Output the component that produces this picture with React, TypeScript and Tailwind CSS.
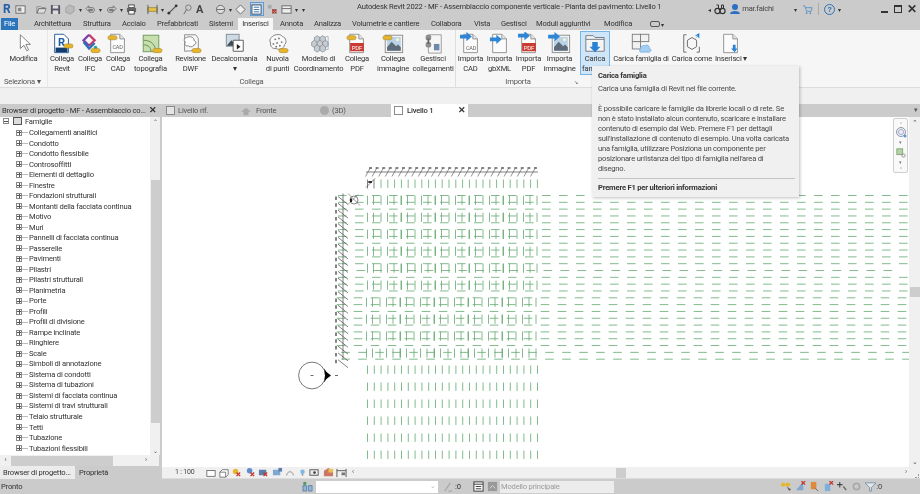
import React from "react";

const rows = (n: number) => Array.from({ length: n }, (_, i) => i);

const TREE = ["Collegamenti analitici","Condotto","Condotto flessibile","Controsoffitti","Elementi di dettaglio","Finestre","Fondazioni strutturali","Montanti della facciata continua","Motivo","Muri","Pannelli di facciata continua","Passerelle","Pavimenti","Pilastri","Pilastri strutturali","Planimetria","Porte","Profili","Profili di divisione","Rampe inclinate","Ringhiere","Scale","Simboli di annotazione","Sistema di condotti","Sistema di tubazioni","Sistemi di facciata continua","Sistemi di travi strutturali","Telaio strutturale","Tetti","Tubazione","Tubazioni flessibili"];

const TABS: [string, string][] = [["Architettura","w-[37px]"],["Struttura","w-[27px]"],["Acciaio","w-[23px]"],["Prefabbricati","w-[40px]"],["Sistemi","w-[22px]"]];
const TABS2: [string, string][] = [["Annota","w-[22px]"],["Analizza","w-[26px]"],["Volumetrie e cantiere","w-[67px]"],["Collabora","w-[31px]"],["Vista","w-[15px]"],["Gestisci","w-[23px]"],["Moduli aggiuntivi","w-[56px]"],["Modifica","w-[29px]"]];

const Badge = ({ x = 15, y = 18 }: { x?: number; y?: number }) => (
  <rect x={x} y={y} width="10" height="4.5" rx="2.2" fill="#e6b52c" stroke="#a9852b" strokeWidth="0.6" />
);
const Page = ({ children }: { children?: React.ReactNode }) => (
  <g>
    <path d="M5 2.5h10l5 5v15H5z" fill="#fbfbfb" stroke="#8d8d8d" />
    <path d="M15 2.5v5h5" fill="#e6e6e6" stroke="#8d8d8d" />
    {children}
  </g>
);
const ArrowR = ({ x = 1, y = 9 }: { x?: number; y?: number }) => (
  <path d={`M${x} ${y}h7v-3l6 5-6 5v-3h-7z`} fill="#2f86d6" />
);
const Pic = () => (
  <g>
    <rect x="4.5" y="3.5" width="19" height="19" fill="#f4f4f4" stroke="#8a8a8a" />
    <rect x="6.5" y="5.5" width="15" height="15" fill="#b9d3e8" />
    <path d="M6.5 20.5v-4l5-6 5 5 2-2 3 3v4z" fill="#5e6b78" />
    <circle cx="18" cy="8.5" r="1.6" fill="#fff6c4" />
  </g>
);
const PdfPage = () => (
  <Page>
    <rect x="5.5" y="12" width="15" height="9" fill="#c93b30" />
    <text x="13" y="19.3" textAnchor="middle" fontSize="6.5" fill="#fff" fontFamily="Roboto, sans-serif">PDF</text>
  </Page>
);

const ICONS: Record<string, React.ReactNode> = {
  modifica: <path d="M9 3l0 15 4-3.5 3 6 2-1-3-6h5z" fill="#fff" stroke="#6f6f6f" strokeWidth="0.9" strokeLinejoin="round" />,
  revit: (<g><path d="M5 2.5h10l5 5v15H5z" fill="#fff" stroke="#20558f" /><rect x="6" y="17" width="13" height="5" fill="#143d6e" /><text x="12.5" y="15" textAnchor="middle" fontSize="12" fontWeight="700" fill="#1c5ea6" fontFamily="Roboto, sans-serif">R</text><Badge x={15} y={13} /></g>),
  ifc: (<g fill="none" strokeWidth="2.6"><path d="M12 3l6 6-6 6" stroke="#c93a6a" /><path d="M12 3L6 9l6 6" stroke="#7b3fb0" /><path d="M6 11l6 7 6-6" stroke="#2d6fb8" /><circle cx="19" cy="17" r="2" fill="#2fa3a0" stroke="none" /><Badge x={14} y={18} /></g>),
  cad: (<Page><text x="12.5" y="19" textAnchor="middle" fontSize="6" fill="#666" fontFamily="Roboto, sans-serif">CAD</text><Badge x={2} y={4} /></Page>),
  topo: (<g><rect x="4.5" y="3.5" width="17" height="18" fill="#c7dfae" stroke="#6e9658" /><path d="M5 9c8 0 13 5 13 12M5 14c5 0 8 3 8 7" fill="none" stroke="#5f8a4c" /><Badge x={15} y={18} /></g>),
  dwf: (<g><path d="M6 3h12l3 4v13l-15 1z" fill="#f7f7f7" stroke="#888" /><path d="M8 6c-3 1-3 4-1 5-2 2 0 5 3 4 2 2 6 1 6-1 3 0 3-4 0-5 1-3-4-5-8-3z" fill="#fff" stroke="#777" /><Badge x={14} y={18} /></g>),
  decal: (<g><rect x="3.5" y="2.5" width="14" height="13" fill="#cfd9e4" stroke="#7f8a94" /><path d="M4 15l5-6 4 4 4-2v4z" fill="#3e4a55" /><path d="M11 9h11v12H11z" fill="#fff" stroke="#555" /><path d="M15 13l4 3-4 3" fill="#222" /></g>),
  nuvola: (<g><path d="M7 5c3-3 9-3 11 0 4 1 5 7 2 9 0 4-6 6-9 4-4 1-7-3-6-6-2-3 0-6 2-7z" fill="#fbfbfb" stroke="#777" />{[[10,8],[14,7],[17,11],[12,12],[8,13],[15,15],[11,16]].map(([x,y],i)=><circle key={i} cx={x} cy={y} r="1" fill="#777" />)}<Badge x={14} y={18} /></g>),
  modello: (<g fill="#c7ccd1" stroke="#7a8088" strokeWidth="0.7">{[[8,4],[14,4],[5,9],[11,9],[17,9],[8,14],[14,14]].map(([x,y],i)=><path key={i} d={`M${x} ${y+2}l3-2 3 2v4l-3 2-3-2z`} />)}<path d="M20 5h3v14h-3" fill="none" stroke="#7f9bbd" /></g>),
  lpdf: <g><PdfPage /><Badge x={2} y={4} /></g>,
  limg: <g><Pic /><Badge x={2} y={4} /></g>,
  gest: (<g><path d="M8 3h14l0 20H8z" fill="#f6f6f6" stroke="#999" /><rect x="5" y="3" width="6" height="6" rx="2" fill="#8e8e8e" /><rect x="5" y="11" width="6" height="6" rx="2" fill="#8e8e8e" /><rect x="7" y="7" width="2" height="6" fill="#666" /><rect x="14" y="13" width="6" height="7" fill="#6f8aa8" /></g>),
  icad: (<Page><text x="13" y="20" textAnchor="middle" fontSize="6" fill="#666" fontFamily="Roboto, sans-serif">CAD</text><ArrowR x={1} y={3} /></Page>),
  ixml: <Page><ArrowR x={2} y={6} /></Page>,
  ipdf: <g><PdfPage /><ArrowR x={1} y={2} /></g>,
  iimg: <g><Pic /><ArrowR x={0} y={3} /></g>,
  fam: (<g><path d="M3 4h8l2 2h10v15H3z" fill="#f5f5f5" stroke="#6d7680" /><path d="M3 8h20" stroke="#6d7680" /><path d="M10 11h6v5h3l-6 6-6-6h3z" fill="#2a82d4" /></g>),
  famdi: (<g><rect x="3.5" y="2.5" width="9" height="8" fill="#f1f1f1" stroke="#7d7d7d" /><rect x="12.5" y="2.5" width="9" height="8" fill="#f1f1f1" stroke="#7d7d7d" /><rect x="3.5" y="10.5" width="9" height="8" fill="#f1f1f1" stroke="#7d7d7d" /><path d="M12 19c0-3 3-5 5-4 2-2 6 0 5 3 2 0 3 3 0 4H13c-2 0-2-3-1-3z" fill="#a4cdf0" stroke="#5a9fdc" strokeWidth="0.6" /></g>),
  come: (<g fill="none" stroke="#666"><path d="M7 3H4v19h3M18 22h3v-6" /><path d="M8 9l5-3 5 3v7l-5 3-5-3z" fill="#f6f6f6" /><path d="M16 8l3-4h-3l5-3v6l-2-2z" fill="#2a82d4" stroke="none" /></g>),
  ins: (<Page><path d="M15 14h3v4h2l-3 4-4-4h2z" fill="#2a82d4" /></Page>),
};

const Ico = ({ name }: { name: string }) => (
  <svg viewBox="0 0 26 24" className="w-[24px] h-[22px] shrink-0">{ICONS[name]}</svg>
);

const Rb = ({ w, icon, a, b, active }: { w: string; icon: string; a: string; b?: string; active?: boolean }) => (
  <div className={`${w} h-[44px] flex flex-col items-center shrink-0 whitespace-nowrap leading-[10px] ${active ? "bg-[#cfe5f8] border border-[#79b4e4] mt-[1px] -mb-[1px]" : ""}`}>
    <div className={`h-[22px] ${active ? "mt-[0px]" : "mt-[2px]"}`}><Ico name={icon} /></div>
    <div className="w-full flex justify-center">{a}</div>
    {b && <div className="w-full flex justify-center">{b}</div>}
  </div>
);

const Small = ({ children, w = 11 }: { children: React.ReactNode; w?: number }) => (
  <svg viewBox="0 0 12 12" width={w} height={w} className="shrink-0">{children}</svg>
);

const RX = ({ x = 7, y = 6 }: { x?: number; y?: number }) => (
  <path d={`M${x} ${y}l4 4m0-4l-4 4`} stroke="#c9332b" strokeWidth="1.4" />
);

function Drawing() {
  const G = "#62a870";
  const K = "#4a4a4a";
  const dashRows = rows(25).map((i) => {
    const y = 196 + i * 6.82;
    let off = i >= 15 ? -1.3 : 0;
    if (i === 11) off = 1.5;
    if (i >= 23) off = 3.2;
    const last = i === 11 ? 892 : i >= 23 ? 920 : 910;
    const d: string[] = [];
    for (let x = 338 + off; x + 8 < last; x += 17) d.push(`M${x.toFixed(2)} ${y.toFixed(2)}h8.6`);
    return d.join("");
  }).join("");
  const bands: string[] = [];
  rows(10).forEach((b) => {
    const cy = 200.8 + b * 16.98;
    const base = b >= 6 ? -1 : 0;
    rows(5).forEach((k) => {
      [367.5, 373.5, 381, 387.5, 394, 401].forEach((o) => {
        const x = o + k * 34 + base;
        bands.push(`M${x.toFixed(1)} ${(cy - 4.6).toFixed(1)}v9.2`);
      });
    });
  });
  const cols: string[] = [];
  [370, 387, 404, 421, 438, 455].forEach((y) => {
    rows(26).forEach((k) => cols.push(`M${(367.5 + k * 6.8).toFixed(1)} ${y - 4}v8.4`));
  });
  rows(24).forEach((k) => cols.push(`M${(381 + k * 6.8).toFixed(1)} 180v8.4`));
  const topTicks = rows(26).map((k) => `M${(365.5 + k * 6.6).toFixed(1)} 177l5-9`).join("");
  const topDots = rows(26).map((k) => `M${(369 + k * 6.6).toFixed(1)} 168.5h3`).join("");
  const leftTicks = rows(25).map((k) => `M338 ${(197 + k * 6.8).toFixed(1)}l10 8`).join("");
  const leftDots = rows(25).map((k) => `M336 ${(197 + k * 6.8).toFixed(1)}v3.5`).join("");
  return (
    <svg viewBox="162 118 747 349" className="w-full h-full block">
      <path d={dashRows} stroke={G} strokeWidth="0.8" fill="none" />
      <path d={bands.join("")} stroke={G} strokeWidth="0.8" fill="none" />
      <path d={cols.join("")} stroke={G} strokeWidth="0.8" fill="none" />
      <path d="M366 172.5H538" stroke={K} strokeWidth="0.7" />
      <path d={topTicks} stroke={K} strokeWidth="0.6" />
      <path d={topDots} stroke="#666" strokeWidth="1.4" />
      <path d="M343 194V360" stroke={K} strokeWidth="0.7" />
      <path d={leftTicks} stroke={K} strokeWidth="0.7" />
      <path d={leftDots} stroke="#666" strokeWidth="1.6" />
      <path d="M367.5 180v9M374 180v9M366 188l9-9M368 182.5h4" stroke={K} strokeWidth="0.7" fill="none" />
      <rect x="368.5" y="181.5" width="3.5" height="2" fill="#333" />
      <circle cx="354" cy="200.5" r="4" fill="#fff" stroke="#555" strokeWidth="0.7" />
      <path d="M348 194l12 12M358 195l-10 10" stroke="#555" strokeWidth="0.6" />
      <rect x="350" y="199" width="2" height="3.5" fill="#222" />
      <circle cx="312" cy="376" r="13.4" fill="#fff" stroke="#555" strokeWidth="0.8" />
      <path d="M324 369q2 4 7 7q-5 3-7 7q2-7 0-14z" fill="#000" />
      <path d="M310.5 376h3M335 376h3" stroke="#444" strokeWidth="0.8" />
    </svg>
  );
}

export default function App() {
  return (
    <div className="relative w-[920px] h-[494px] overflow-hidden flex flex-col bg-[#f0f0f0] text-[7.6px] tracking-[-0.2px] text-[#333] blur-[0.3px] font-['Roboto',sans-serif]">
      {/* Title bar */}
      <div className="h-[18px] shrink-0 bg-[#cbcbcb] flex items-center relative">
        <div className="flex items-center pl-[3px] gap-[3.3px] w-[357px] shrink-0">
          <span className="text-[12px] leading-none font-bold text-[#1f5fa8] w-[9px]">R</span>
          <Small><rect x="1" y="2" width="10" height="8" fill="#eee" stroke="#666" /><rect x="3" y="4" width="4" height="4" fill="#888" /></Small>
          <span className="w-[3px]" />
          <Small><path d="M1 3h4l1 1h4v1H3l-2 5zM3 5h8l-2 5H1z" fill="#ddd" stroke="#666" strokeWidth="0.7" /></Small>
          <Small><path d="M1 1h9l1 1v9H1z" fill="#556" /><rect x="3" y="1.5" width="6" height="3.5" fill="#ddd" /><rect x="3" y="7" width="6" height="4" fill="#ddd" /></Small>
          <Small><path d="M2 4l4-3 5 2v5l-4 3-5-2z" fill="#bbb" stroke="#888" strokeWidth="0.6" /></Small>
          <span className="text-[6px] w-[3px]">▾</span>
          <Small><path d="M1 5l3-3v2h4c3 0 3 5 0 5H5v-2h3c1 0 1-1 0-1H4v2z" fill="none" stroke="#666" strokeWidth="0.9" /></Small>
          <span className="text-[6px] w-[3px]">▾</span>
          <Small><path d="M11 5L8 2v2H4c-3 0-3 5 0 5h3V7H4c-1 0-1-1 0-1h4v2z" fill="none" stroke="#666" strokeWidth="0.9" /></Small>
          <span className="text-[6px] w-[3px]">▾</span>
          <Small><rect x="3" y="1" width="6" height="3" fill="#fff" stroke="#444" /><rect x="1" y="4" width="10" height="5" rx="1" fill="#666" /><rect x="3" y="7" width="6" height="4" fill="#fff" stroke="#444" /></Small>
          <span className="w-[3px]" />
          <Small><path d="M1 4h10v4H1z" fill="#e6c34a" stroke="#8a7320" strokeWidth="0.7" /><path d="M1 1v10M11 1v10" stroke="#555" /></Small>
          <span className="text-[6px] w-[3px]">▾</span>
          <Small><path d="M2 10l8-8" stroke="#555" strokeWidth="1.4" /><circle cx="2" cy="10" r="1.5" fill="#333" /><circle cx="10" cy="2" r="1.5" fill="#333" /></Small>
          <Small><circle cx="7" cy="4" r="3" fill="none" stroke="#777" /><path d="M2 11l3-5" stroke="#666" /></Small>
          <span className="text-[11px] leading-none font-bold text-[#444] w-[8px]">A</span>
          <span className="w-[4px]" />
          <Small><circle cx="6" cy="6" r="4.5" fill="#ddd" stroke="#666" /><path d="M2 6h8" stroke="#666" /></Small>
          <span className="text-[6px] w-[3px]">▾</span>
          <Small><path d="M6 1l5 5-5 5-5-5z" fill="#eee" stroke="#666" /></Small>
          <div className="w-[14px] h-[14px] bg-[#bcd6ee] border border-[#5e9bd2] flex items-center justify-center shrink-0">
            <Small><rect x="1" y="1" width="10" height="10" fill="#fff" stroke="#345" /><path d="M3 3.5h6M3 6h6M3 8.5h6" stroke="#2a6fb8" /></Small>
          </div>
          <Small><rect x="1" y="1" width="4" height="4" fill="#aaa" /><rect x="6" y="6" width="4" height="4" fill="#eee" stroke="#777" /><RX x={6} y={6} /></Small>
          <Small><rect x="1" y="2" width="10" height="8" fill="#eee" stroke="#666" /><path d="M1 5h10" stroke="#666" /></Small>
          <span className="text-[6px] w-[3px]">▾</span>
          <span className="text-[6px]">▾</span>
        </div>
        <div className="w-[304px] text-center whitespace-nowrap shrink-0 -mt-[4px]">Autodesk Revit 2022 - MF - Assemblaccio componente verticale - Pianta del pavimento: Livello 1</div>
        <div className="flex items-center flex-1 justify-end pr-[3px]">
          <span className="text-[6px] mr-[3px]">◂</span>
          <Small w={12}><circle cx="3.5" cy="8" r="2.6" fill="none" stroke="#333" strokeWidth="1.2" /><circle cx="8.5" cy="8" r="2.6" fill="none" stroke="#333" strokeWidth="1.2" /><path d="M2.5 2h2v4h3V2h2v4" fill="none" stroke="#333" /></Small>
          <span className="w-[3px]" />
          <Small w={12}><circle cx="6" cy="4" r="3" fill="#2a6fc4" /><path d="M1 11c0-4 10-4 10 0z" fill="#2a6fc4" /></Small>
          <span className="ml-[1px] w-[52px] text-[#444]">mar.falchi</span>
          <span className="text-[6px] w-[8px]">▾</span>
          <Small><path d="M1 2h2l2 6h5l1-4H4" fill="none" stroke="#5d93c4" /><circle cx="5" cy="10" r="1" fill="#5d93c4" /><circle cx="9" cy="10" r="1" fill="#5d93c4" /></Small>
          <span className="w-px h-[12px] bg-[#aaa] mx-[5px]" />
          <span className="w-[11px] h-[11px] rounded-full border border-[#2a72b8] text-[#2a72b8] text-[8px] leading-[10px] text-center font-bold">?</span>
          <span className="text-[6px] ml-[3px] w-[43px]">▾</span>
          <span className="w-[7px] h-[2px] bg-[#333] mt-[6px]" />
          <span className="ml-[6px] w-[8px] h-[8px] border border-[#333] border-t-2" />
          <span className="ml-[5px] text-[12px] leading-none font-bold text-[#333]">✕</span>
        </div>
      </div>

      {/* Ribbon tabs */}
      <div className="h-[12px] shrink-0 bg-[#cbcbcb] flex items-stretch whitespace-nowrap">
        <div className="ml-[1px] w-[17px] bg-[#2a75bb] text-white flex items-center justify-center">File</div>
        <div className="flex items-center gap-[12px] pl-[16px]">
          {TABS.map(([t, w]) => <span key={t} className={w}>{t}</span>)}
        </div>
        <div className="w-[35px] ml-[7px] bg-[#f6f6f6] flex items-center justify-center">Inserisci</div>
        <div className="flex items-center gap-[12px] pl-[7px]">
          {TABS2.map(([t, w]) => <span key={t} className={w}>{t}</span>)}
          <span className="ml-[5px] w-[10px] h-[6px] rounded-[2px] border border-[#555]" />
          <span className="text-[6px] -ml-[11px]">▾</span>
        </div>
      </div>

      {/* Ribbon */}
      <div className="h-[58px] shrink-0 bg-[#f6f6f6] border-b border-[#dcdcdc] flex items-stretch">
        <div className="w-[47px] shrink-0 flex flex-col justify-between">
          <Rb w="w-[47px]" icon="modifica" a="Modifica" />
          <div className="leading-[10px] pl-[4px] text-[#555]">Seleziona ▾</div>
        </div>
        <div className="w-[408px] shrink-0 flex flex-col justify-between border-l border-[#e8e8e8]">
          <div className="flex">
            <Rb w="w-[28px]" icon="revit" a="Collega" b="Revit" />
            <Rb w="w-[28px]" icon="ifc" a="Collega" b="IFC" />
            <Rb w="w-[28px]" icon="cad" a="Collega" b="CAD" />
            <Rb w="w-[37px]" icon="topo" a="Collega" b="topografia" />
            <Rb w="w-[43px]" icon="dwf" a="Revisione" b="DWF" />
            <Rb w="w-[45px]" icon="decal" a="Decalcomania" b="▾" />
            <Rb w="w-[41px]" icon="nuvola" a="Nuvola" b="di punti" />
            <Rb w="w-[41px]" icon="modello" a="Modello di" b="Coordinamento" />
            <Rb w="w-[36px]" icon="lpdf" a="Collega" b="PDF" />
            <Rb w="w-[36px]" icon="limg" a="Collega" b="immagine" />
            <Rb w="w-[44px]" icon="gest" a="Gestisci" b="collegamenti" />
          </div>
          <div className="leading-[10px] text-center text-[#555]">Collega</div>
        </div>
        <div className="w-[125px] shrink-0 flex flex-col justify-between border-l border-[#dedede]">
          <div className="flex">
            <Rb w="w-[29px]" icon="icad" a="Importa" b="CAD" />
            <Rb w="w-[29px]" icon="ixml" a="Importa" b="gbXML" />
            <Rb w="w-[29px]" icon="ipdf" a="Importa" b="PDF" />
            <Rb w="w-[33px]" icon="iimg" a="Importa" b="immagine" />
          </div>
          <div className="leading-[10px] text-center text-[#555] relative">Importa<span className="absolute right-[2px] text-[5px]">↘</span></div>
        </div>
        <div className="flex items-start">
          <Rb w="w-[30px]" icon="fam" a="Carica" b="famiglia" active />
          <Rb w="w-[62px]" icon="famdi" a="Carica famiglia di" />
          <Rb w="w-[40px]" icon="come" a="Carica come" />
          <Rb w="w-[38px]" icon="ins" a="Inserisci ▾" />
        </div>
      </div>

      <div className="h-[16px] shrink-0 bg-[#f0f0f0]" />

      {/* Main */}
      <div className="flex-1 min-h-0 flex bg-[#cbcbcb]">
        {/* Browser */}
        <div className="w-[160px] shrink-0 flex flex-col">
          <div className="h-[13px] shrink-0 flex items-center justify-between pl-[2px] pr-[3px] whitespace-nowrap">
            <span>Browser di progetto - MF - Assemblaccio co...</span>
            <span className="font-bold text-[9px] leading-none text-[#333]">✕</span>
          </div>
          <div className="flex-1 min-h-0 flex bg-white">
            <div className="flex-1 min-w-0 overflow-hidden">
              <div className="h-[10.5px] -mt-[1px] mb-[1px] flex items-center">
                <span className="ml-[3px] w-[6px] h-[6px] border border-[#888] flex items-center justify-center"><span className="w-[4px] h-px bg-[#555]" /></span>
                <span className="ml-[4px] w-[9px] h-[8px] border border-[#555] bg-[#ddd]" />
                <span className="ml-[3px]">Famiglie</span>
              </div>
              {TREE.map((t) => (
                <div key={t} className="h-[10.52px] flex items-center whitespace-nowrap">
                  <span className="ml-[16px] w-[6px] h-[6px] border border-[#888] relative shrink-0">
                    <span className="absolute left-0 top-[1.5px] w-[4px] h-px bg-[#555]" />
                    <span className="absolute left-[1.5px] top-0 w-px h-[4px] bg-[#555]" />
                  </span>
                  <span className="w-[6px] h-px bg-[#bbb] mr-[1px]" />
                  <span>{t}</span>
                </div>
              ))}
            </div>
            <div className="w-[10px] shrink-0 bg-[#f0f0f0] flex flex-col items-center relative">
              <span className="h-[63px] text-[6px] leading-[10px] text-[#555]">⌃</span>
              <span className="w-[9px] h-[243px] bg-[#cdcdcd]" />
              <span className="absolute bottom-[0px] text-[6px] text-[#555]">⌄</span>
            </div>
          </div>
          <div className="h-[11px] shrink-0 bg-[#f0f0f0] flex items-center mr-[1px]">
            <span className="w-[11px] text-center text-[7px] leading-none text-[#555]">‹</span>
            <span className="w-[102px] h-[10px] bg-[#cdcdcd]" />
            <span className="flex-1 text-right pr-[12px] text-[7px] leading-none text-[#555]">›</span>
          </div>
          <div className="h-[13px] shrink-0 flex whitespace-nowrap">
            <div className="w-[75px] bg-[#ececec] flex items-center pl-[3px]">Browser di progetto...</div>
            <div className="flex-1 flex items-center pl-[4px]">Proprietà</div>
          </div>
        </div>

        {/* Views */}
        <div className="flex-1 min-w-0 ml-[2px] flex flex-col relative">
          <div className="h-[13px] shrink-0 flex items-stretch whitespace-nowrap relative">
            <div className="w-[78px] flex items-center pl-[4px] gap-[3px] text-[#555]">
              <span className="w-[9px] h-[9px] border border-[#8a8a8a] bg-[#e4e4e4]" />Livello rif.
            </div>
            <div className="w-[77px] flex items-center pl-[1px] gap-[5px] text-[#555]">
              <Small w={10}><path d="M6 2l6 5H9v4H3V7H0z" fill="#aaa" /></Small>Fronte
            </div>
            <div className="w-[74px] flex items-center pl-[3px] gap-[3px] text-[#555]">
              <span className="w-[9px] h-[9px] rounded-full bg-[#aaa]" />(3D)
            </div>
            <div className="w-[77px] bg-white flex items-center pl-[3px] gap-[4px] font-medium text-[#333]">
              <span className="w-[9px] h-[9px] border border-[#8a8a8a]" />
              <span className="flex-1">Livello 1</span>
              <span className="font-bold text-[9px] leading-none pr-[2px]">✕</span>
            </div>
            <span className="absolute right-[2px] top-[1px] text-[7px] text-[#555]">▾</span>
          </div>
          <div className="flex-1 min-h-0 flex bg-white">
            <div className="flex-1 min-w-0 relative"><Drawing /></div>
            <div className="w-[11px] shrink-0 bg-[#f0f0f0] flex flex-col items-center relative">
              <span className="text-[7px] leading-[10px] text-[#555] mt-[1px]">⌃</span>
              <span className="mt-[159px] w-[10px] h-[10px] bg-[#cdcdcd]" />
              <span className="absolute bottom-[1px] text-[7px] leading-[8px] text-[#555]">⌄</span>
            </div>
          </div>
          <div className="h-[11px] shrink-0 bg-[#f0f0f0] flex items-center">
            <span className="ml-[13px] w-[24px] text-[7px] text-[#444]">1 : 100</span>
            <span className="ml-[7px] flex items-center gap-[2.5px]">
              <Small w={10}><rect x="1" y="3" width="10" height="7" fill="#fff" stroke="#666" /></Small>
              <Small w={10}><path d="M1 5h7v6H1zM1 5l3-3h7v6l-3 3" fill="#fff" stroke="#666" /></Small>
              <Small w={11}><circle cx="5" cy="5" r="3" fill="#e5b72f" /><RX x={6} y={6} /></Small>
              <Small w={11}><circle cx="5" cy="4" r="3" fill="#5a8fcb" /><RX x={6} y={6} /></Small>
              <Small w={11}><rect x="1" y="3" width="8" height="6" fill="#5a7fab" /><RX x={6} y={6} /></Small>
              <Small w={11}><rect x="1" y="3" width="8" height="6" fill="#7fa7d1" /><rect x="7" y="1" width="4" height="4" fill="#5a7fab" /></Small>
              <Small w={10}><path d="M2 9c0-6 8-6 8 0" fill="none" stroke="#888" /></Small>
              <Small w={9}><circle cx="6" cy="5" r="3" fill="#7fb8e6" /><rect x="5" y="8" width="2" height="2" fill="#888" /></Small>
              <Small w={11}><rect x="1" y="3" width="9" height="6" fill="#eee" stroke="#555" /><circle cx="6" cy="6" r="1.5" fill="#444" /></Small>
              <Small w={11}><path d="M1 10V4l5-3 5 3v6z" fill="#c76" /><rect x="6" y="2" width="5" height="4" fill="#e9c34d" /></Small>
              <Small w={11}><path d="M1 2v9M11 2v9M1 4h10" stroke="#555" fill="none" /><rect x="6" y="6" width="4" height="3" fill="#777" /></Small>
            </span>
            <span className="ml-[5px] text-[7px] leading-none text-[#555]">‹</span>
            <span className="ml-[262px] flex-1 h-[10px] relative flex items-center justify-end pr-[13px]">
              <span className="absolute left-[0px] w-[10px] h-[10px] bg-[#cdcdcd]" />
              <span className="text-[7px] leading-none text-[#555]">›</span>
              <span className="absolute right-[1px] bottom-0 w-[4px] h-[4px] border-r border-b border-dotted border-[#999]" />
            </span>
          </div>
          <div className="h-px shrink-0 bg-[#dcdcdc]" />

          {/* Navigation bar */}
          <div className="absolute left-[731px] top-[14px] w-[15px] h-[55px] bg-[#f9f9f9] border border-[#cfcfcf] rounded-[2px] flex flex-col items-center justify-around py-[2px]">
            <span className="w-[2px] h-[2px] rounded-full bg-[#ccc]" />
            <Small w={12}><circle cx="6" cy="6" r="4.5" fill="#eef" stroke="#8a9aa8" /><circle cx="6" cy="6" r="2.5" fill="none" stroke="#aab" /><circle cx="10" cy="10" r="1.5" fill="#5b9bd5" /></Small>
            <span className="text-[5px] leading-none text-[#777]">▾</span>
            <Small w={10}><rect x="1" y="1" width="7" height="7" fill="#b3d3a4" stroke="#7c9f6d" /><circle cx="9" cy="9" r="2" fill="none" stroke="#888" /></Small>
            <span className="text-[5px] leading-none text-[#777]">▾</span>
            <span className="w-[2px] h-[2px] rounded-full bg-[#ccc]" />
          </div>
        </div>
      </div>

      {/* Status bar */}
      <div className="h-[15px] shrink-0 bg-[#cbcbcb] flex items-center whitespace-nowrap">
        <span className="ml-[1px] w-[301px]">Pronto</span>
        <Small w={11}><path d="M1 5h4v6H1zM7 5h4v6H7z" fill="#8fb5d8" stroke="#3c6d94" strokeWidth="0.7" /><circle cx="3" cy="2.5" r="1.8" fill="#4e9a5e" /></Small>
        <span className="ml-[3px] w-[122px] h-[12px] bg-white flex items-center justify-end pr-[2px] text-[7px] text-[#bbb]">⌄</span>
        <span className="ml-[4px]"><Small w={11}><path d="M3 11l6-9M7 11h4" stroke="#aaa" strokeWidth="1.4" /></Small></span>
        <span className="ml-[2px] w-[18px] text-[#333]">:0</span>
        <Small w={11}><rect x="1" y="1" width="10" height="10" fill="#fff" stroke="#333" /><path d="M1 3.5h10M3 6h6M3 8.5h6" stroke="#333" /></Small>
        <span className="ml-[3px]"><Small w={11}><rect x="1" y="1" width="10" height="10" fill="#999" /><path d="M3 8l3-3 3 3" stroke="#ddd" fill="none" /></Small></span>
        <span className="ml-[2px] w-[114px] h-[12px] bg-[#ececec] text-[#9a9a9a] flex items-center pl-[1px]">Modello principale</span>
        <span className="ml-auto mr-[38px] flex items-center gap-[3px]">
          <Small><rect x="0" y="2" width="5" height="4" rx="2" fill="#e6b52c" /><rect x="5" y="2" width="5" height="4" rx="2" fill="#e6b52c" /><path d="M6 6l3 5 2-2z" fill="#666" /></Small>
          <Small><path d="M1 10L7 3h2v7z" fill="#7fa7d1" /><RX x={7} y={0} /></Small>
          <Small><rect x="2" y="1" width="6" height="8" fill="#dd8a3a" /><path d="M7 8l3 3" stroke="#666" /></Small>
          <Small><rect x="2" y="3" width="6" height="8" fill="#7fb0dd" /><RX x={7} y={0} /></Small>
          <Small><path d="M3 1v6M0 4h6" stroke="#444" strokeWidth="1.2" /><path d="M7 6l3 4" stroke="#666" strokeWidth="1.5" /></Small>
          <Small><circle cx="6" cy="6" r="3.4" fill="none" stroke="#aaa" strokeWidth="2" /></Small>
          <span className="flex items-center">
            <Small><path d="M0 2h12L7 7v4H5V7z" fill="#dfe9f2" stroke="#6b7f91" strokeWidth="0.8" /></Small>
            <span className="text-[#444]">:0</span>
          </span>
        </span>
      </div>

      {/* Tooltip */}
      <div className="absolute left-[592px] top-[66px] w-[207px] h-[131px] bg-[#f0f0f0] shadow-[1px_1px_3px_rgba(0,0,0,0.25)] pl-[6px] pr-[3px] pt-[5px] leading-[10px] whitespace-nowrap text-[#4a4a4a]">
        <div className="font-bold text-[#333]">Carica famiglia</div>
        <div className="mt-[3px]">Carica una famiglia di Revit nel file corrente.</div>
        <div className="mt-[10px]">
          È possibile caricare le famiglie da librerie locali o di rete. Se<br />
          non è stato installato alcun contenuto, scaricare e installare<br />
          contenuto di esempio dal Web. Premere F1 per dettagli<br />
          sull'installazione di contenuto di esempio. Una volta caricata<br />
          una famiglia, utilizzare Posiziona un componente per<br />
          posizionare un'istanza del tipo di famiglia nell'area di<br />
          disegno.
        </div>
        <div className="mt-[4px] mr-[1px] border-t border-[#c4c4c4] pt-[4px] font-bold text-[#333]">Premere F1 per ulteriori informazioni</div>
      </div>
    </div>
  );
}
